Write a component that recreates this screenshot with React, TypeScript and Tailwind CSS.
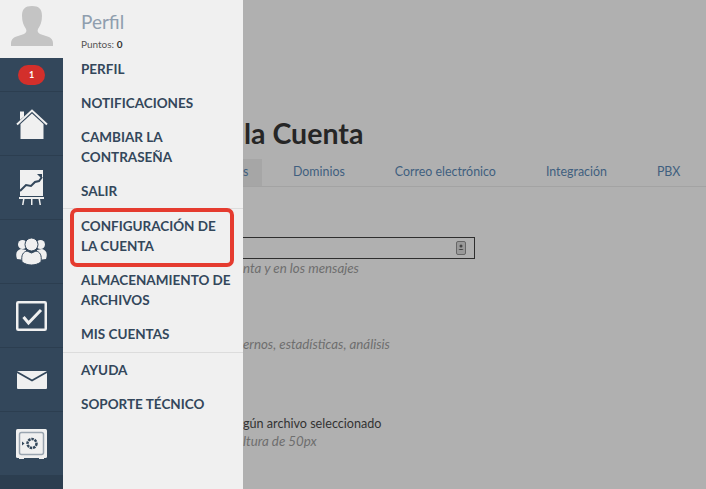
import { ReactNode } from 'react'

function Avatar() {
  return (
    <svg width="42" height="40" viewBox="0 0 42 40" fill="#c4c4c4">
      <path d="M21 0c7 0 10 3 10 10 0 6-2 10-4 13-1 2 0 4 2 5l9 3c2 1 4 3 4 6v3H0v-3c0-3 2-5 4-6l9-3c2-1 3-3 2-5-2-3-4-7-4-13C11 3 14 0 21 0z" />
    </svg>
  )
}

function HomeIcon() {
  return (
    <svg width="32" height="30" viewBox="0 0 32 30">
      <path d="M4.500 15v15h23V15L16 4.500z" fill="#f0f0f0" />
      <path d="M1 15.500L16 1.500l15 14" fill="none" stroke="#f0f0f0" strokeWidth="2" />
      <path d="M4 2.500h4v5l-4 3.500z" fill="#f0f0f0" />
    </svg>
  )
}

function ChartIcon() {
  return (
    <svg width="25" height="35" viewBox="0 0 25 35">
      <path d="M1 0h23v26H1z" fill="#f0f0f0" />
      <path d="M1 21l6-6 5 1 4-4 4-1 3-4" fill="none" stroke="#33475b" strokeWidth="2" />
      <path d="M18 4h5v5z" fill="#33475b" />
      <path d="M0 27h25v2H0zM4 29h1.500l-1 6H3zM12 29h1.500v6H12zM19.500 29H21l1 6h-1.500z" fill="#f0f0f0" />
    </svg>
  )
}

function PeopleIcon() {
  return (
    <svg width="31" height="27" viewBox="0 0 31 27" fill="#f0f0f0">
      <circle cx="6.500" cy="6.500" r="4.500" />
      <circle cx="24.500" cy="6.500" r="4.500" />
      <path d="M1 21c-2-6 0-9 4-10l5 1-1 10zM30 21c2-6 0-9-4-10l-5 1 1 10z" />
      <ellipse cx="15.500" cy="6.500" rx="6.500" ry="6.500" stroke="#33475b" />
      <path d="M6 24c-1-7 1-10 5-11l4.500 2 4.500-2c4 1 6 4 5 11-3 2-6 3-9.500 3S9 26 6 24z" stroke="#33475b" />
    </svg>
  )
}

function CheckIcon() {
  return (
    <svg width="31" height="30" viewBox="0 0 31 30">
      <rect x="1.250" y="1.250" width="28.500" height="27.500" rx="1" fill="#33475b" stroke="#f0f0f0" strokeWidth="2.500" />
      <path d="M7.500 16l5 6L25 9" fill="none" stroke="#f0f0f0" strokeWidth="3" />
    </svg>
  )
}

function MailIcon() {
  return (
    <svg width="30" height="18" viewBox="0 0 30 18" fill="#f0f0f0">
      <path d="M0 0h30L15 8.500z" />
      <path d="M0 2l15 8.500L30 2v15a1 1 0 0 1-1 1H1a1 1 0 0 1-1-1z" />
    </svg>
  )
}

function SafeIcon() {
  return (
    <svg width="31" height="30" viewBox="0 0 31 30">
      <rect width="31" height="29" rx="1.500" fill="#f0f0f0" />
      <path d="M3 29h5v1H3zM23 29h5v1h-5z" fill="#f0f0f0" />
      <rect x="3.500" y="3.500" width="24" height="22" rx="2" fill="none" stroke="#9aa5b0" strokeWidth="1.500" />
      <circle cx="16" cy="14.500" r="4.500" fill="none" stroke="#33475b" strokeWidth="2.500" strokeDasharray="2.500 0.830" />
      <path d="M6 12.500l2.500 2-2.500 2z" fill="#33475b" />
    </svg>
  )
}

function SideItem({ children }: { children: ReactNode }) {
  return (
    <div className="h-16 flex items-center justify-center border-b border-[#2c3e50] bg-[#33475b]">
      {children}
    </div>
  )
}

function MenuLink({ children }: { children: ReactNode }) {
  return (
    <div className="px-[18px] py-[7px] text-[13.500px] leading-5 font-bold text-[#33475b] whitespace-nowrap">
      {children}
    </div>
  )
}

function Tab({ label }: { label: string }) {
  return <div className="h-[27px] flex items-center px-[25px] text-[12.400px] text-[#3f5f7f] whitespace-nowrap">{label}</div>
}

export default function App() {
  return (
    <div className="flex h-[489px] w-[706px] overflow-hidden font-['Lato','Liberation_Sans',sans-serif]">
      <aside className="w-[63px] shrink-0 flex flex-col bg-[#2c3e50]">
        <div className="h-[58px] bg-[#f0f0f0] flex justify-center pt-[6px]">
          <Avatar />
        </div>
        <div className="h-[34px] bg-[#33475b] border-b border-[#2c3e50] flex justify-center pt-[7px]">
          <div className="w-[27px] h-5 rounded-[10px] bg-[#d32f2b] text-white text-[9px] font-bold flex items-center justify-center">
            1
          </div>
        </div>
        <SideItem><HomeIcon /></SideItem>
        <SideItem><ChartIcon /></SideItem>
        <SideItem><PeopleIcon /></SideItem>
        <SideItem><CheckIcon /></SideItem>
        <SideItem><MailIcon /></SideItem>
        <SideItem><SafeIcon /></SideItem>
      </aside>

      <nav className="relative w-[180px] shrink-0 bg-[#f0f0f0]">
        <div className="h-[52px] pl-[18px] pt-[11px]">
          <div className="text-[19px] leading-[22px] text-[#8f9eae]">Perfil</div>
          <div className="text-[10px] leading-[14px] mt-[4px] text-[#555555]">
            Puntos: <b className="text-[#333333]">0</b>
          </div>
        </div>
        <MenuLink>PERFIL</MenuLink>
        <MenuLink>NOTIFICACIONES</MenuLink>
        <MenuLink>CAMBIAR LA<br />CONTRASEÑA</MenuLink>
        <div className="border-b border-[#dcdcdc]">
          <MenuLink>SALIR</MenuLink>
        </div>
        <MenuLink>CONFIGURACIÓN DE<br />LA CUENTA</MenuLink>
        <MenuLink>ALMACENAMIENTO DE<br />ARCHIVOS</MenuLink>
        <div className="border-b border-[#dcdcdc] pb-[1px]">
          <MenuLink>MIS CUENTAS</MenuLink>
        </div>
        <MenuLink>AYUDA</MenuLink>
        <MenuLink>SOPORTE TÉCNICO</MenuLink>
        <div className="absolute left-[7px] top-[208px] w-[164px] h-[59px] border-4 border-[#e53b2f] rounded-[7px]" />
      </nav>

      <main className="flex-1 min-w-0 bg-[#b0b0b0] pt-[117px]">
        <h1 className="pl-[1px] text-[28.500px] leading-8 font-bold text-[#262626] whitespace-nowrap">la Cuenta</h1>
        <div className="mt-[10px] flex border-b border-[#a3a3a3] h-[28px]">
          <div className="w-[19px] h-[27px] mr-[6px] flex items-center bg-[#a6a6a6] text-[12.400px] text-[#3f5f7f]">s</div>
          <Tab label="Dominios" />
          <Tab label="Correo electrónico" />
          <Tab label="Integración" />
          <Tab label="PBX" />
        </div>
        <div className="mt-[50px] w-[232px] h-[22px] border border-l-0 border-[#2e2e2e] flex items-center justify-end pr-[8px]">
          <svg width="10" height="14" viewBox="0 0 10 14">
            <rect x="0.500" y="0.500" width="9" height="13" rx="1.500" fill="#999999" stroke="#666666" />
            <circle cx="5" cy="5" r="1.500" fill="#444" />
            <path d="M2.500 9c0-1.500 5-1.500 5 0z" fill="#444" />
          </svg>
        </div>
        <p className="mt-[1px] text-[13.300px] leading-4 italic text-[#6e6e6e] whitespace-nowrap">nta y en los mensajes</p>
        <p className="mt-[60px] text-[13.300px] leading-4 italic text-[#6e6e6e] whitespace-nowrap">ernos, estadísticas, análisis</p>
        <p className="mt-[64px] text-[12.600px] leading-4 text-[#333333] whitespace-nowrap">gún archivo seleccionado</p>
        <p className="mt-[1px] text-[13.300px] leading-4 italic text-[#6e6e6e] whitespace-nowrap">ltura de 50px</p>
      </main>
    </div>
  )
}
